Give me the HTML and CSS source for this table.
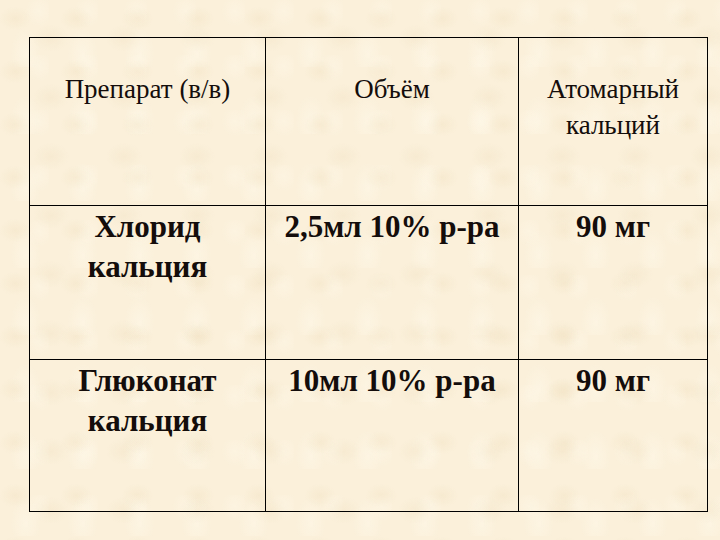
FILE: index.html
```html
<!DOCTYPE html>
<html lang="ru">
<head>
<meta charset="utf-8">
<title>Препараты кальция</title>
<link rel="stylesheet" href="styles.css">
</head>
<body>
<div class="sheet">
  <table class="grid">
    <colgroup>
      <col class="c1">
      <col class="c2">
      <col class="c3">
    </colgroup>
    <tr class="head">
      <td>Препарат (в/в)</td>
      <td>Объём</td>
      <td>Атомарный<br>кальций</td>
    </tr>
    <tr class="row r1">
      <td>Хлорид<br>кальция</td>
      <td>2,5мл 10% р-ра</td>
      <td>90 мг</td>
    </tr>
    <tr class="row r2">
      <td>Глюконат<br>кальция</td>
      <td>10мл 10% р-ра</td>
      <td>90 мг</td>
    </tr>
  </table>
</div>
</body>
</html>
```
FILE: styles.css
```css
html, body {
  margin: 0;
  padding: 0;
}
body {
  width: 720px;
  height: 540px;
  overflow: hidden;
  background-color: #fbf0da;
  background-image:
    radial-gradient(ellipse at 25% 35%, rgba(236, 218, 182, 0.28) 0, rgba(236, 218, 182, 0) 16px),
    radial-gradient(ellipse at 70% 65%, rgba(232, 214, 178, 0.22) 0, rgba(232, 214, 178, 0) 18px),
    radial-gradient(ellipse at 45% 80%, rgba(255, 250, 236, 0.45) 0, rgba(255, 250, 236, 0) 15px),
    radial-gradient(ellipse at 80% 20%, rgba(255, 249, 234, 0.4) 0, rgba(255, 249, 234, 0) 14px);
  background-size: 61px 53px, 73px 59px, 57px 67px, 49px 55px;
  font-family: "Liberation Serif", "Times New Roman", serif;
  color: #140d0b;
}
.sheet {
  padding: 37px 0 0 29px;
}
.grid {
  border-collapse: collapse;
  table-layout: fixed;
  width: 678px;
}
.c1 { width: 236px; }
.c2 { width: 253px; }
.c3 { width: 189px; }
.grid td {
  border: 1.5px solid #000;
  text-align: center;
  vertical-align: top;
  padding: 0 2px;
}
.head td {
  height: 168px;
  box-sizing: border-box;
  padding-top: 33px;
  font-size: 27px;
  line-height: 36px;
  font-weight: normal;
}
.row td {
  box-sizing: border-box;
  padding-top: 1px;
  font-size: 31px;
  line-height: 40px;
  font-weight: bold;
}
.r1 td { height: 154px; }
.r2 td { height: 152px; }
```
